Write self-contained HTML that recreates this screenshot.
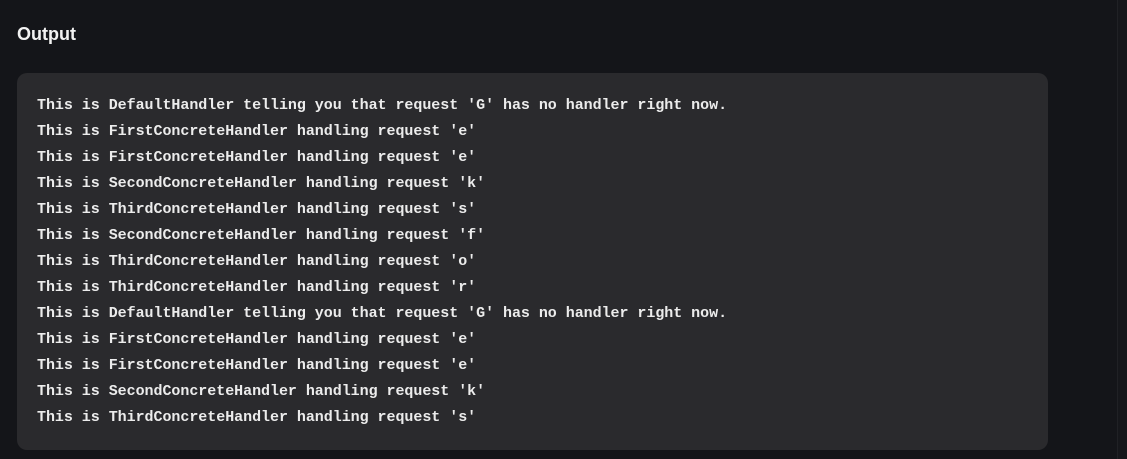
<!DOCTYPE html>
<html><head><style>
html,body{margin:0;padding:0;width:1127px;height:459px;background:#141519;overflow:hidden;}
h3{position:absolute;left:17px;top:21px;margin:0;font:bold 18px/26px "Liberation Sans",sans-serif;color:#f2f2f2;}
.box{position:absolute;left:17px;top:73px;width:1031px;height:377px;background:#2a2a2d;border-radius:10px;}
pre{position:absolute;left:37px;top:93px;margin:0;font:bold 15px/26px "Liberation Mono",monospace;color:#ececec;letter-spacing:-0.04px;}
.sb{position:absolute;left:1117px;top:0;width:10px;height:459px;background:#16171b;border-left:1px solid #202125;}
</style></head><body>
<h3>Output</h3>
<div class="box"></div>
<pre>This is DefaultHandler telling you that request 'G' has no handler right now.
This is FirstConcreteHandler handling request 'e'
This is FirstConcreteHandler handling request 'e'
This is SecondConcreteHandler handling request 'k'
This is ThirdConcreteHandler handling request 's'
This is SecondConcreteHandler handling request 'f'
This is ThirdConcreteHandler handling request 'o'
This is ThirdConcreteHandler handling request 'r'
This is DefaultHandler telling you that request 'G' has no handler right now.
This is FirstConcreteHandler handling request 'e'
This is FirstConcreteHandler handling request 'e'
This is SecondConcreteHandler handling request 'k'
This is ThirdConcreteHandler handling request 's'</pre>
<div class="sb"></div>
</body></html>
